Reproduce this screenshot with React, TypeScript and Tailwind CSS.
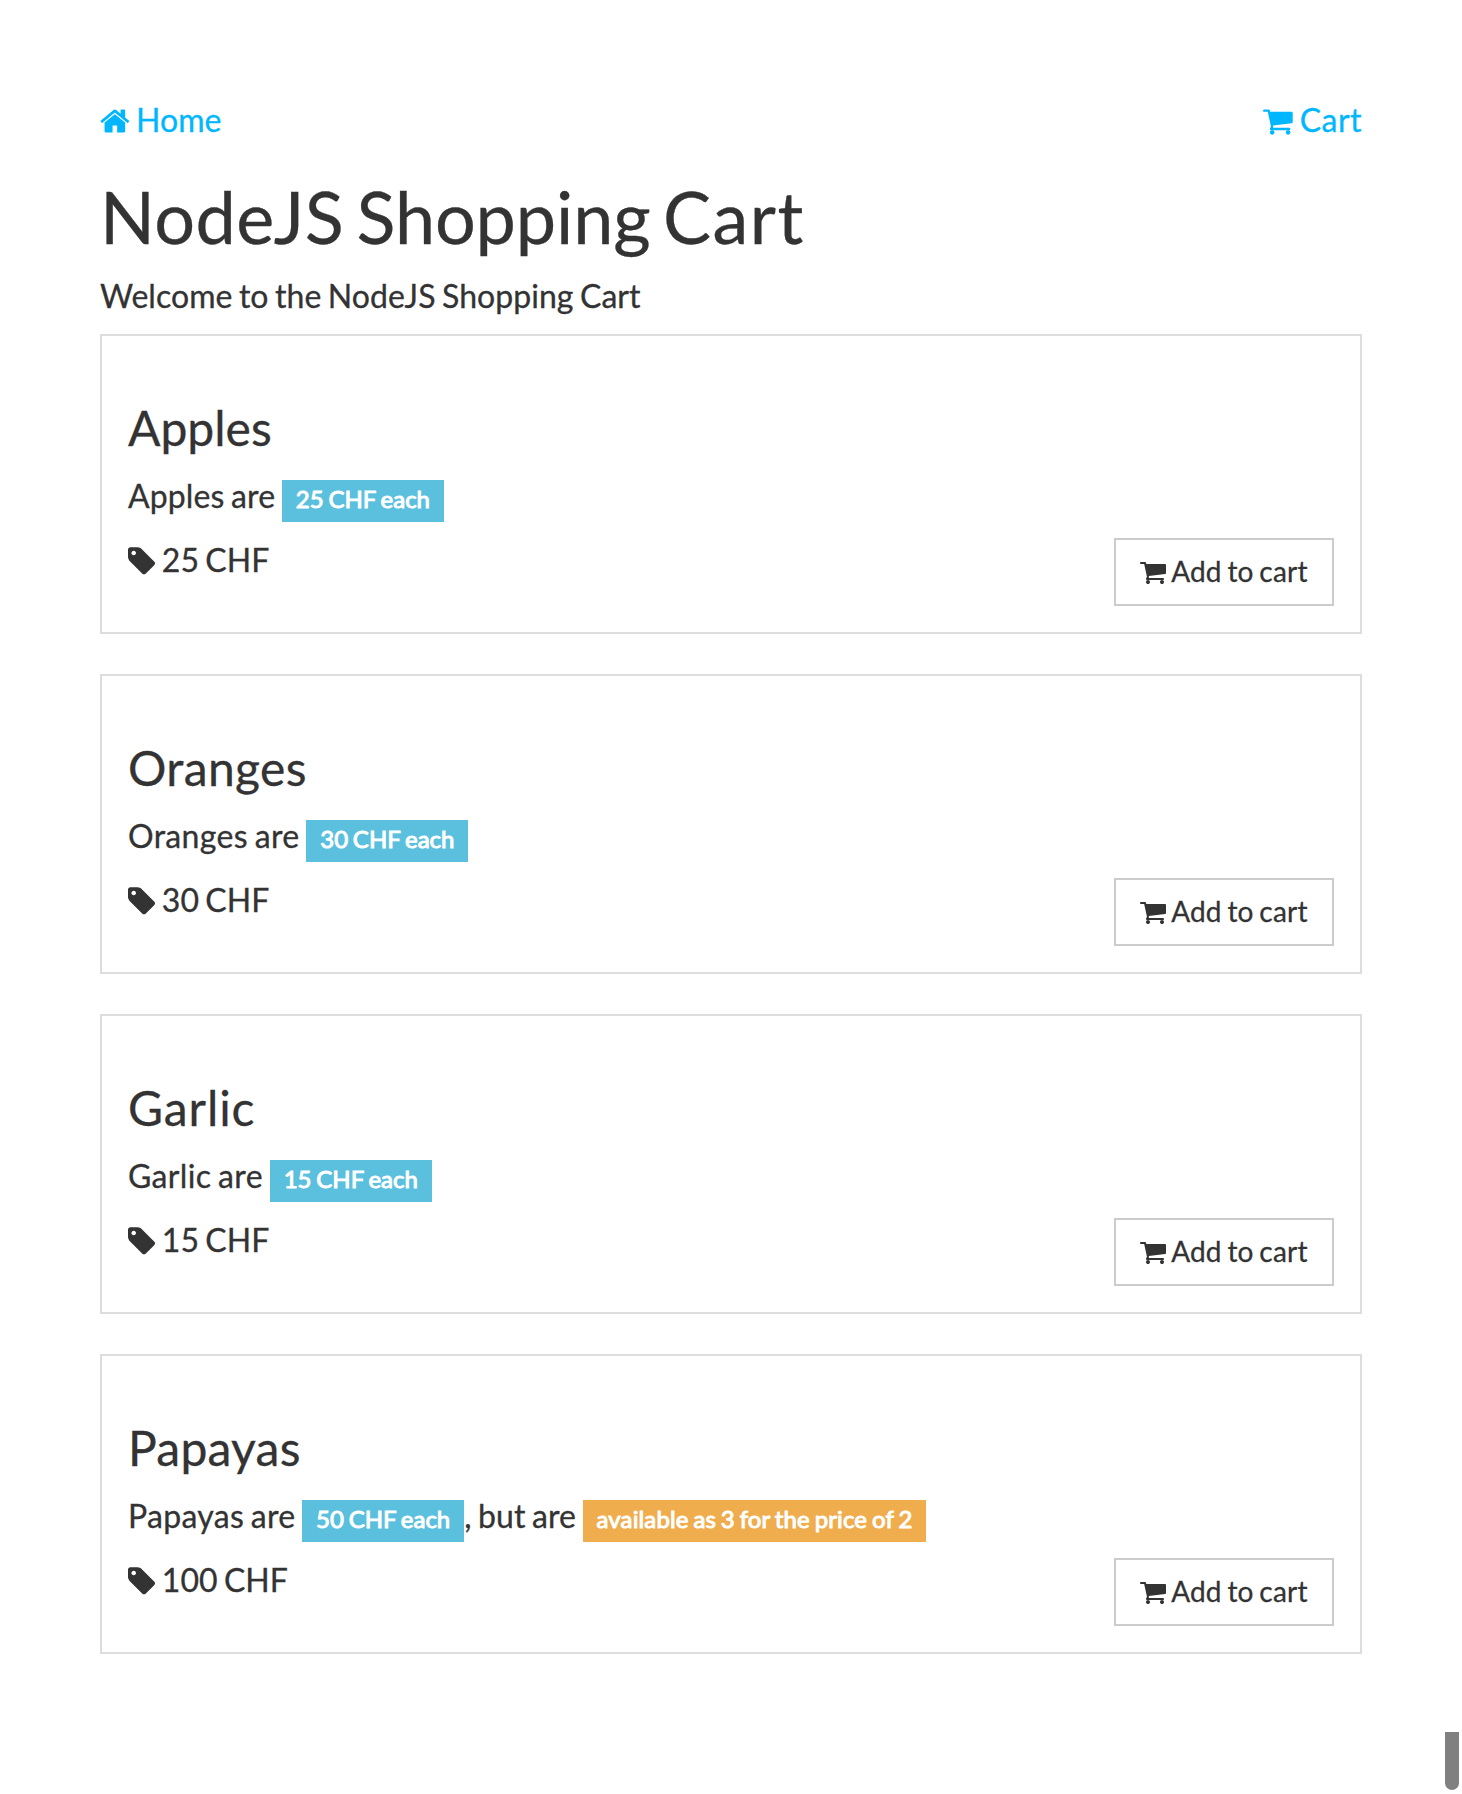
import type { ReactNode } from "react";

type IconProps = { className?: string };

const iconBase = "inline-block h-[1em] align-[-0.143em] fill-current";

function HomeIcon({ className = "" }: IconProps) {
  return (
    <svg viewBox="64 0 1664 1792" className={`${iconBase} w-[0.9286em] ${className}`} aria-hidden="true">
      <path d="M1472 992v480q0 26-19 45t-45 19h-384v-384h-256v384h-384q-26 0-45-19t-19-45v-480q0-1 .5-3t.5-3l575-474 575 474q1 2 1 6zm223-69l-62 74q-8 9-21 11h-3q-13 0-21-7l-692-577-692 577q-12 8-24 7-13-2-21-11l-62-74q-8-10-7-23.5t11-21.5l719-599q32-26 76-26t76 26l244 204v-195q0-14 9-23t23-9h192q14 0 23 9t9 23v408l219 182q10 8 11 21.5t-7 23.5z" />
    </svg>
  );
}

function CartIcon({ className = "" }: IconProps) {
  return (
    <svg viewBox="64 0 1664 1792" className={`${iconBase} w-[0.9286em] ${className}`} aria-hidden="true">
      <path d="M704 1536q0 52-38 90t-90 38-90-38-38-90 38-90 90-38 90 38 38 90zm896 0q0 52-38 90t-90 38-90-38-38-90 38-90 90-38 90 38 38 90zm128-1088v512q0 24-16.5 42.5t-40.5 21.5l-1044 122q13 60 13 70 0 16-24 64h920q26 0 45 19t19 45-19 45-45 19h-1024q-26 0-45-19t-19-45q0-11 8-31.5t16-36 21.5-40 15.5-29.5l-177-823h-204q-26 0-45-19t-19-45 19-45 45-19h256q16 0 28.5 6.5t19.5 15.5 13 24.5 8 26 5.5 29.5 4.5 26h1201q26 0 45 19t19 45z" />
    </svg>
  );
}

function TagIcon({ className = "" }: IconProps) {
  return (
    <svg viewBox="128 0 1536 1792" className={`${iconBase} w-[0.857em] ${className}`} aria-hidden="true">
      <path d="M576 448q0-53-37.5-90.5t-90.5-37.5-90.5 37.5-37.5 90.5 37.5 90.5 90.5 37.5 90.5-37.5 37.5-90.5zm1067 576q0 53-37 90l-491 492q-39 37-91 37-53 0-90-37l-715-716q-38-37-64.5-101t-26.5-117v-416q0-52 38-90t90-38h416q53 0 117 26.5t102 64.5l715 714q37 39 37 91z" />
    </svg>
  );
}

function Label({ tone, children }: { tone: "info" | "warning"; children: ReactNode }) {
  const look = tone === "info" ? "bg-[#5bc0de] tracking-[0.01px]" : "bg-[#f0ad4e] tracking-[0.13px]";
  return (
    <span
      className={`inline-block h-[42px] px-[14px] text-[24px] leading-[37px] [word-spacing:-0.06em] text-white [-webkit-text-stroke:1px_white] ${look}`}
    >
      {children}
    </span>
  );
}

type Product = {
  name: string;
  unit: number;
  price: number;
  offer?: string;
  titleTracking: string;
  textTracking: string;
};

const products: Product[] = [
  { name: "Apples", unit: 25, price: 25, titleTracking: "tracking-normal", textTracking: "tracking-[0.13px]" },
  { name: "Oranges", unit: 30, price: 30, titleTracking: "tracking-[0.35px]", textTracking: "tracking-[0.34px]" },
  { name: "Garlic", unit: 15, price: 15, titleTracking: "tracking-[0.9px]", textTracking: "tracking-[0.34px]" },
  {
    name: "Papayas",
    unit: 50,
    price: 100,
    offer: "available as 3 for the price of 2",
    titleTracking: "tracking-[0.25px]",
    textTracking: "tracking-[0.29px]",
  },
];

function ProductCard({ product }: { product: Product }) {
  return (
    <article className="h-[300px] border-2 border-[#ddd] px-[26px] pt-[66px]">
      <h3 className={`text-[48px] leading-[52px] ${product.titleTracking}`}>{product.name}</h3>
      <p className={`mt-5 h-11 whitespace-nowrap ${product.textTracking}`}>
        {product.name} are <Label tone="info">{product.unit} CHF each</Label>
        {product.offer && (
          <span className="tracking-[0.08px]">
            , but are <Label tone="warning">{product.offer}</Label>
          </span>
        )}
      </p>
      <div className="mt-5 flex items-start justify-between">
        <p>
          <TagIcon /> {product.price} CHF
        </p>
        <button className="h-[68px] w-[220px] border-2 border-[#ccc] bg-white pb-[2px] text-[28px] leading-[40px] tracking-[0.18px] whitespace-nowrap [word-spacing:-0.058em]">
          <CartIcon /> Add to cart
        </button>
      </div>
    </article>
  );
}

export default function App() {
  return (
    <div className="h-[1794px] overflow-hidden bg-white px-[100px] pt-[98px] font-['Lato',sans-serif] text-[32px] leading-[44px] [word-spacing:-1.8px] text-[#333] [-webkit-text-stroke:0.3px]">
      <nav className="flex justify-between text-[#00b7ff]">
        <a href="#">
          <HomeIcon /> Home
        </a>
        <a href="#" className="tracking-[0.45px]">
          <CartIcon /> Cart
        </a>
      </nav>
      <h1 className="mt-[34px] text-[72px] leading-[80px] [word-spacing:-0.083em]">
        <span className="tracking-[0.4px]">NodeJS</span> <span className="tracking-[-0.15px]">Shopping</span>{" "}
        <span className="tracking-[1.5px]">Cart</span>
      </h1>
      <p className="mt-[18px] tracking-[0.05px]">Welcome to the NodeJS Shopping Cart</p>
      <main className="mt-4 flex flex-col gap-10">
        {products.map((product) => (
          <ProductCard key={product.name} product={product} />
        ))}
      </main>
      <div className="fixed right-[3px] bottom-1 h-[58px] w-[14px] rounded-b-full bg-[#808080]" />
    </div>
  );
}
